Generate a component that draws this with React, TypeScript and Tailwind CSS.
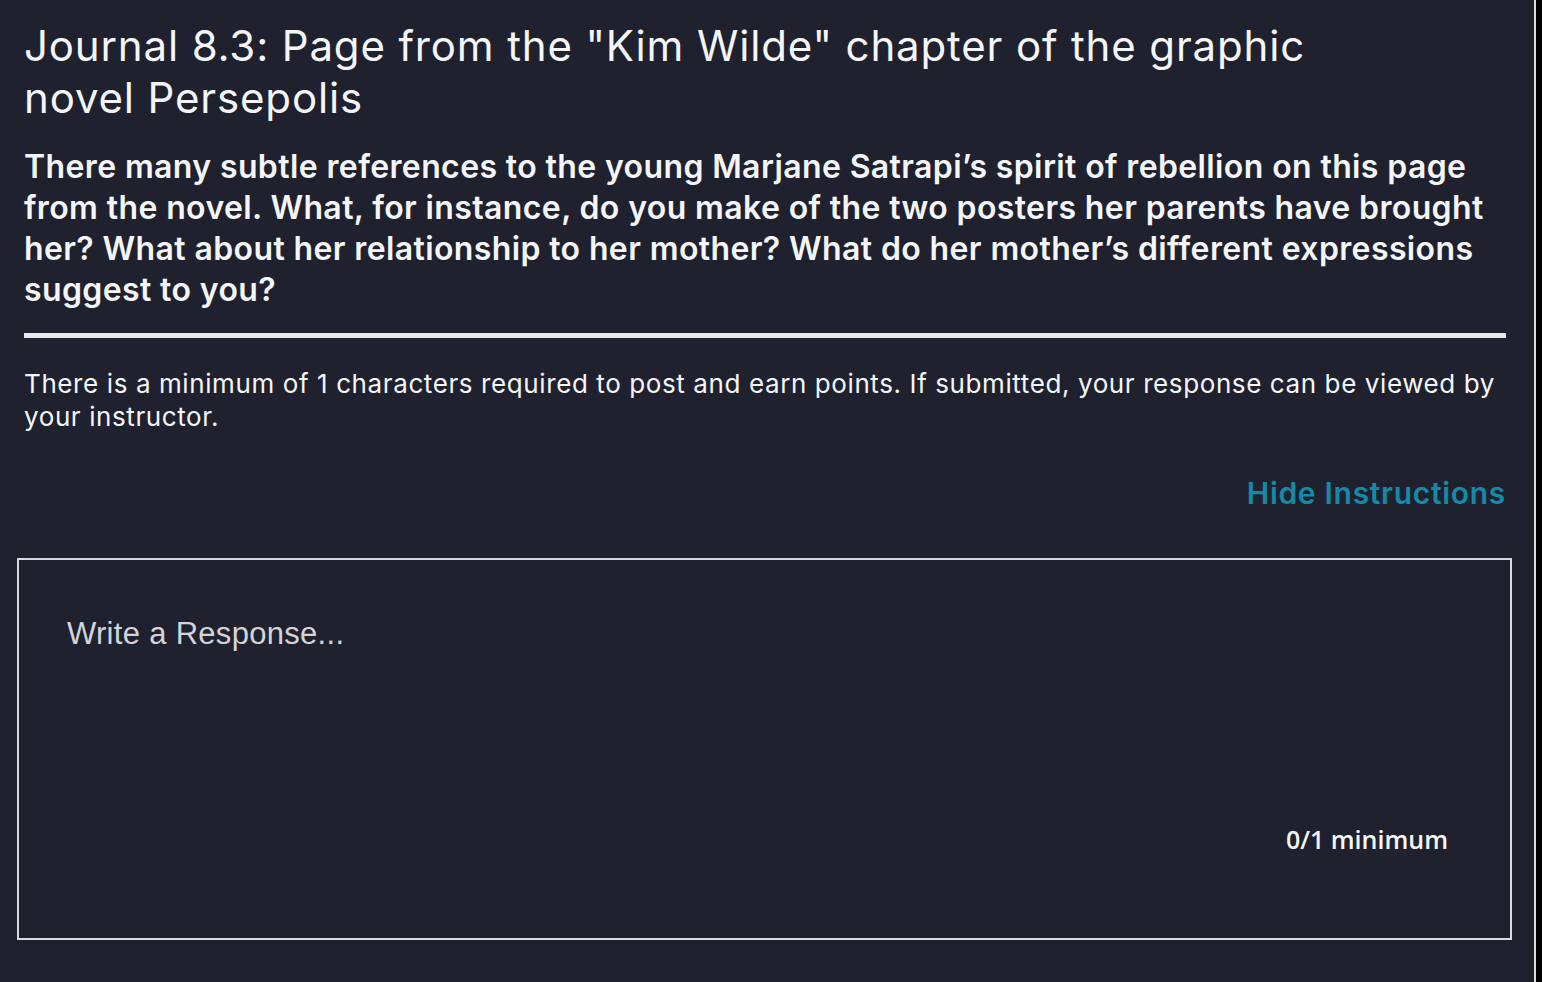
import React from "react";

const App = () => {
  return (
    <div className="flex h-[982px] w-[1542px] bg-black">
      <div
        className="flex w-[1536px] flex-col border-r-2 border-[#d9dadf] bg-[#1f222e] text-[#f4f5f7]"
        style={{ fontFamily: "Inter, 'Noto Sans', sans-serif" }}
      >
        <div className="flex flex-col px-6">
          <h1 className="mt-[20px] w-[1320px] text-[42px] font-normal leading-[52px] tracking-[0.85px]">
            Journal 8.3: Page from the "Kim Wilde" chapter of the graphic novel Persepolis
          </h1>
          <p className="mt-[22px] text-[32px] font-semibold leading-[41px] tracking-[0.38px]">
            There many subtle references to the young Marjane Satrapi’s spirit of rebellion on this page from the
            novel. What, for instance, do you make of the two posters her parents have brought her? What about her
            relationship to her mother? What do her mother’s different expressions suggest to you?
          </p>
          <div className="mt-[23px] h-[5px] w-[1482px] bg-[#e9eaee]" />
          <p className="mt-[29px] text-[26px] leading-[33px] tracking-[0.6px]">
            There is a minimum of 1 characters required to post and earn points. If submitted, your response can be
            viewed by your instructor.
          </p>
          <div className="mt-[40px] flex justify-end pr-[4px]">
            <button className="text-[30px] font-semibold leading-[40px] tracking-[0.7px] text-[#1489a8]">
              Hide Instructions
            </button>
          </div>
        </div>
        <div className="ml-[17px] mt-[45px] flex h-[382px] w-[1495px] flex-col border-2 border-[#d9dadf] px-[48px] pt-[56px] pb-[83px]">
          <div
            className="text-[31px] leading-[36px] tracking-[0.3px] text-[#d3d4da]"
            style={{ fontFamily: "'Liberation Sans', Arial, sans-serif" }}
          >
            Write a Response...
          </div>
          <div
            className="mt-auto self-end pr-[14px] text-[25px] font-semibold leading-[32px] text-[#f4f5f7]"
            style={{ fontFamily: "'Open Sans', 'Noto Sans', sans-serif" }}
          >
            0/1 minimum
          </div>
        </div>
      </div>
    </div>
  );
};

export default App;
